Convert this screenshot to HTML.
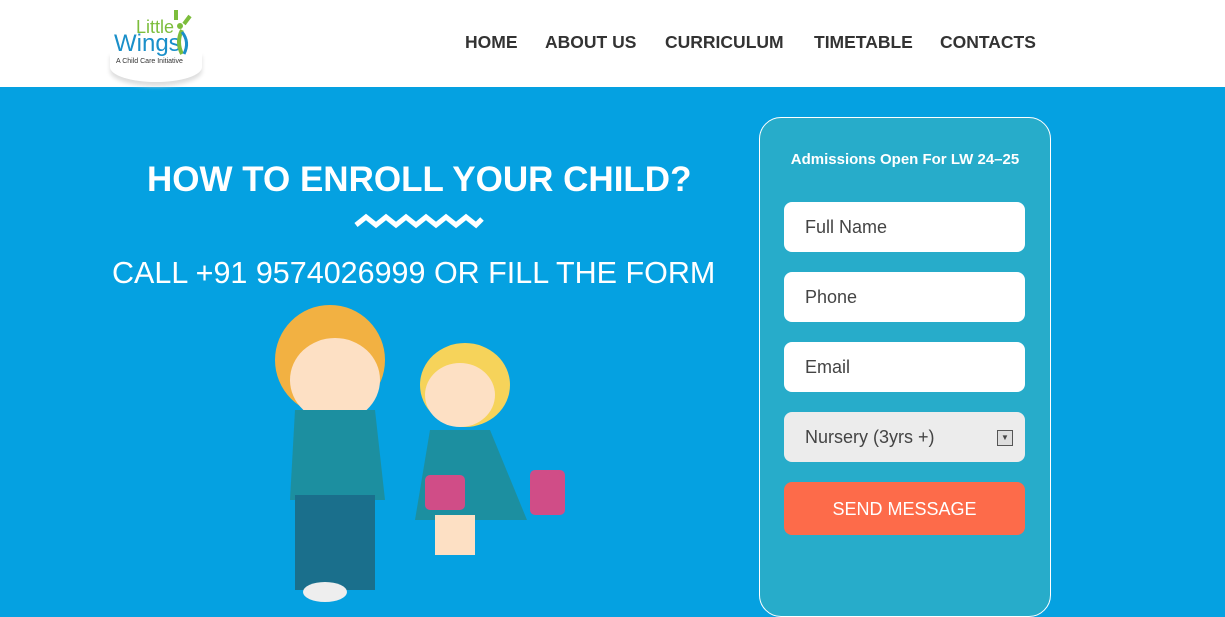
<!DOCTYPE html>
<html><head><style>
*{margin:0;padding:0;box-sizing:border-box}
body{width:1225px;height:602px;overflow:hidden;font-family:"Liberation Sans",sans-serif;background:#05a1e1;position:relative}
.hdr{position:absolute;left:0;top:0;width:1225px;height:87px;background:#fff}
.nav{position:absolute;top:32px;font-weight:bold;font-size:17.5px;color:#333}
.h1{position:absolute;left:147px;top:160px;color:#fff;font-size:35px;font-weight:bold}
.call{position:absolute;left:112px;top:256px;color:#fff;font-size:30.5px}
.form{position:absolute;left:759px;top:117px;width:292px;height:500px;border:1px solid #fff;border-radius:22px;background:#27acca}
.inp{position:absolute;left:784px;width:241px;height:50px;background:#fff;border-radius:8px;font-size:18px;color:#444;padding:15px 0 0 21px}
</style></head><body>
<div class="hdr">
<div style="position:absolute;left:110px;top:52px;width:92px;height:30px;border-radius:0 0 50% 50%;box-shadow:0 4px 4px #ddd"></div>
<div style="position:absolute;left:136px;top:17px;font-size:18px;color:#7cbd3c">Little</div>
<div style="position:absolute;left:114px;top:30px;font-size:24px;color:#1a8fc9">Wings</div>
<svg style="position:absolute;left:170px;top:2px" width="30" height="55"><path d="M6 8 L6 18 M20 14 L14 22 M12 28 Q6 40 12 52" stroke="#7cbd3c" stroke-width="4" fill="none"/><path d="M12 30 Q20 40 14 52" stroke="#1a8fc9" stroke-width="3" fill="none"/><circle cx="10" cy="24" r="3" fill="#7cbd3c"/></svg>
<div style="position:absolute;left:116px;top:58px;font-size:7px;color:#333">A Child Care Initiative</div>
<div class="nav" style="left:465px">HOME</div>
<div class="nav" style="left:545px">ABOUT US</div>
<div class="nav" style="left:665px">CURRICULUM</div>
<div class="nav" style="left:814px">TIMETABLE</div>
<div class="nav" style="left:940px">CONTACTS</div>
</div>
<div class="h1">HOW TO ENROLL YOUR CHILD?</div>
<svg style="position:absolute;left:354px;top:213px" width="130" height="16"><path d="M2 12 L12 4 L22 12 L32 4 L42 12 L52 4 L62 12 L72 4 L82 12 L92 4 L102 12 L112 4 L122 12 L128 6" stroke="#fff" stroke-width="5" fill="none"/></svg>
<div class="call">CALL +91 9574026999 OR FILL THE FORM</div>
<svg style="position:absolute;left:265px;top:300px" width="310" height="302">
<ellipse cx="65" cy="60" rx="55" ry="55" fill="#f2b142"/>
<ellipse cx="70" cy="80" rx="45" ry="42" fill="#fde0c4"/>
<path d="M30 110 L110 110 L120 200 L25 200 Z" fill="#1c8fa0"/>
<rect x="30" y="195" width="80" height="95" fill="#1a6f8c"/>
<ellipse cx="60" cy="292" rx="22" ry="10" fill="#eee"/>
<ellipse cx="200" cy="85" rx="45" ry="42" fill="#f6d35a"/>
<ellipse cx="195" cy="95" rx="35" ry="32" fill="#fde0c4"/>
<path d="M165 130 L225 130 L262 220 L150 220 Z" fill="#1c8fa0"/>
<rect x="170" y="215" width="40" height="40" fill="#fde0c4"/>
<rect x="160" y="175" width="40" height="35" rx="5" fill="#d04d87"/>
<rect x="265" y="170" width="35" height="45" rx="5" fill="#d04d87"/>
</svg>
<div class="form"></div>
<div style="position:absolute;left:760px;top:151px;width:290px;text-align:center;color:#fff;font-weight:bold;font-size:15px">Admissions Open For LW 24–25</div>
<div class="inp" style="top:202px">Full Name</div>
<div class="inp" style="top:272px">Phone</div>
<div class="inp" style="top:342px">Email</div>
<div class="inp" style="top:412px;background:#ececec">Nursery (3yrs +)<div style="position:absolute;right:12px;top:18px;width:16px;height:16px;border:1px solid #555;background:#ddd;font-size:8px;text-align:center;line-height:14px">▼</div></div>
<div class="inp" style="top:482px;height:53px;background:#fd6b4a;color:#fff;text-align:center;padding:17px 0 0">SEND MESSAGE</div>
</body></html>
